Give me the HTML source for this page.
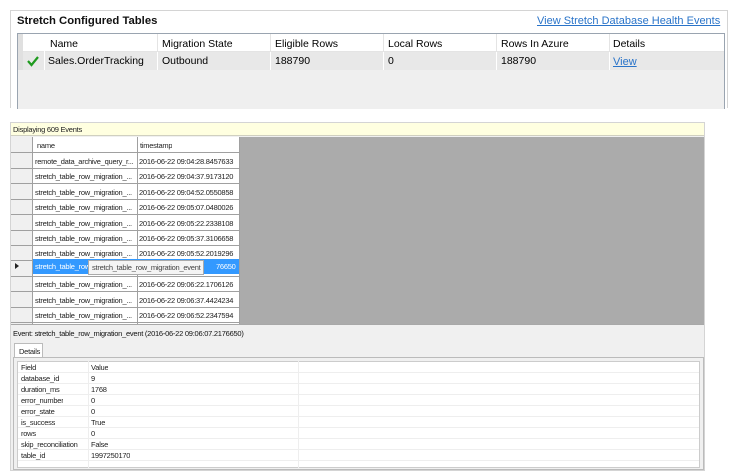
<!DOCTYPE html>
<html><head><style>
*{margin:0;padding:0;box-sizing:border-box}
body{width:732px;height:475px;background:#fff;position:relative;font-family:"Liberation Sans",sans-serif;overflow:hidden}
.a{position:absolute}
.t{font-size:10.5px;color:#000;white-space:nowrap}
.s{font-size:7.5px;letter-spacing:-0.25px;color:#222;white-space:nowrap;overflow:hidden}
</style></head><body>
<div class="a" style="left:10px;top:10px;width:718px;height:98px;border:1px solid #d4d4d4;border-bottom:none;background:#fff"></div>
<div class="a" style="left:17px;top:15px;font-size:11.3px;font-weight:bold;color:#111;white-space:nowrap">Stretch Configured Tables</div>
<div class="a" style="left:537px;top:15px;font-size:11px;color:#2a74c9;text-decoration:underline;white-space:nowrap">View Stretch Database Health Events</div>
<div class="a" style="left:17px;top:33px;width:708px;height:76px;border:1px solid #9aa4b0;border-bottom:none;background:#efefef"></div>
<div class="a" style="left:18px;top:34px;width:706px;height:18px;background:#fff;border-bottom:1px solid #e4e4e4"></div>
<div class="a" style="left:18px;top:52px;width:706px;height:18px;background:#e8e8e8"></div>
<div class="a" style="left:18px;top:34px;width:5px;height:36px;background:#e0e0e0"></div>
<div class="a" style="left:44px;top:34px;width:1px;height:36px;background:#fff"></div>
<div class="a" style="left:157px;top:34px;width:1px;height:36px;background:#fff"></div>
<div class="a" style="left:270px;top:34px;width:1px;height:36px;background:#fff"></div>
<div class="a" style="left:383px;top:34px;width:1px;height:36px;background:#fff"></div>
<div class="a" style="left:496px;top:34px;width:1px;height:36px;background:#fff"></div>
<div class="a" style="left:609px;top:34px;width:1px;height:36px;background:#fff"></div>
<div class="a" style="left:157px;top:34px;width:1px;height:18px;background:#e4e4e4"></div>
<div class="a" style="left:270px;top:34px;width:1px;height:18px;background:#e4e4e4"></div>
<div class="a" style="left:383px;top:34px;width:1px;height:18px;background:#e4e4e4"></div>
<div class="a" style="left:496px;top:34px;width:1px;height:18px;background:#e4e4e4"></div>
<div class="a" style="left:609px;top:34px;width:1px;height:18px;background:#e4e4e4"></div>
<div class="a t" style="left:50px;top:38px">Name</div>
<div class="a t" style="left:162px;top:38px">Migration State</div>
<div class="a t" style="left:275px;top:38px">Eligible Rows</div>
<div class="a t" style="left:388px;top:38px">Local Rows</div>
<div class="a t" style="left:501px;top:38px">Rows In Azure</div>
<div class="a t" style="left:613px;top:38px">Details</div>
<svg class="a" style="left:26px;top:55px" width="14" height="12"><path d="M2 6 L5.5 10 L12 2" stroke="#1e9a1e" stroke-width="2.2" fill="none"/></svg>
<div class="a t" style="left:48px;top:55px">Sales.OrderTracking</div>
<div class="a t" style="left:162px;top:55px">Outbound</div>
<div class="a t" style="left:275px;top:55px">188790</div>
<div class="a t" style="left:388px;top:55px">0</div>
<div class="a t" style="left:501px;top:55px">188790</div>
<div class="a t" style="left:613px;top:56px;font-size:11px;color:#2a74c9;text-decoration:underline">View</div>

<div class="a" style="left:10px;top:122px;width:695px;height:349px;border:1px solid #d4d4d4;background:#f0f0f0"></div>
<div class="a" style="left:11px;top:123px;width:693px;height:13px;background:#ffffe0;border-bottom:1px solid #d0d0c0"></div>
<div class="a s" style="left:13px;top:125px">Displaying 609 Events</div>
<div class="a" style="left:11px;top:137px;width:693px;height:187px;background:#ababab"></div>
<div class="a" style="left:11px;top:137px;width:229px;height:187px;background:#fff"></div>
<div class="a" style="left:11px;top:137px;width:22px;height:187px;background:#f0f0f0;border-right:1px solid #a0a0a0"></div>
<div class="a" style="left:137px;top:137px;width:1px;height:187px;background:#a0a0a0"></div>
<div class="a" style="left:239px;top:137px;width:1px;height:187px;background:#a0a0a0"></div>
<div class="a" style="left:11px;top:152px;width:229px;height:1px;background:#a0a0a0"></div>
<div class="a s" style="left:37px;top:141px">name</div>
<div class="a s" style="left:140px;top:141px">timestamp</div>
<div id="rows"></div>
<div class="a" style="left:33px;top:259px;width:206px;height:15px;background:#3399ff"></div>
<div class="a s" style="left:35px;top:262px;color:#fff">stretch_table_row</div>
<div class="a s" style="left:216px;top:262px;color:#fff">76650</div>
<div class="a s" style="left:88px;top:260px;background:#f4f4f4;border:1px solid #aaa;padding:2px 3px;color:#444">stretch_table_row_migration_event</div>
<div class="a" style="left:15px;top:263px;width:0;height:0;border-left:4px solid #222;border-top:3px solid transparent;border-bottom:3px solid transparent"></div>
<div class="a" style="left:11px;top:324px;width:693px;height:1px;background:#a8a8a8"></div>
<div class="a s" style="left:13px;top:329px;color:#111">Event: stretch_table_row_migration_event (2016-06-22 09:06:07.2176650)</div>
<div class="a s" style="left:14px;top:343px;width:29px;height:15px;border:1px solid #bbb;border-bottom:none;background:#fff;padding:3px 0 0 4px">Details</div>
<div class="a" style="left:13px;top:357px;width:691px;height:113px;border:1px solid #bbb;background:#f0f0f0"></div>
<div class="a" style="left:17px;top:361px;width:683px;height:107px;background:#fff;border:1px solid #ccc"></div>
<div class="a" style="left:88px;top:361px;width:1px;height:107px;background:#eee"></div>
<div class="a" style="left:298px;top:361px;width:1px;height:107px;background:#eee"></div>
<div id="det"></div>
<script>
var names=["remote_data_archive_query_r...","stretch_table_row_migration_...","stretch_table_row_migration_...","stretch_table_row_migration_...","stretch_table_row_migration_...","stretch_table_row_migration_...","stretch_table_row_migration_...","","stretch_table_row_migration_...","stretch_table_row_migration_...","stretch_table_row_migration_..."];
var ts=["2016-06-22 09:04:28.8457633","2016-06-22 09:04:37.9173120","2016-06-22 09:04:52.0550858","2016-06-22 09:05:07.0480026","2016-06-22 09:05:22.2338108","2016-06-22 09:05:37.3106658","2016-06-22 09:05:52.2019296","","2016-06-22 09:06:22.1706126","2016-06-22 09:06:37.4424234","2016-06-22 09:06:52.2347594"];
var h="";
for(var i=0;i<11;i++){var y=153+i*15.4;
h+='<div class="a" style="left:11px;top:'+(y+15)+'px;width:229px;height:1px;background:#a0a0a0"></div>';
if(names[i])h+='<div class="a s" style="left:35px;top:'+(y+4)+'px;width:101px">'+names[i]+'</div><div class="a s" style="left:139px;top:'+(y+4)+'px;width:100px">'+ts[i]+'</div>';}
document.getElementById("rows").innerHTML=h;
var f=[["Field","Value"],["database_id","9"],["duration_ms","1768"],["error_number","0"],["error_state","0"],["is_success","True"],["rows","0"],["skip_reconciliation","False"],["table_id","1997250170"]];
h="";
for(i=0;i<f.length;i++){var y=362+i*11;
h+='<div class="a" style="left:18px;top:'+(y+10)+'px;width:681px;height:1px;background:#eee"></div><div class="a s" style="left:21px;top:'+(y+1)+'px">'+f[i][0]+'</div><div class="a s" style="left:91px;top:'+(y+1)+'px">'+f[i][1]+'</div>';}
document.getElementById("det").innerHTML=h;
</script>
</body></html>
